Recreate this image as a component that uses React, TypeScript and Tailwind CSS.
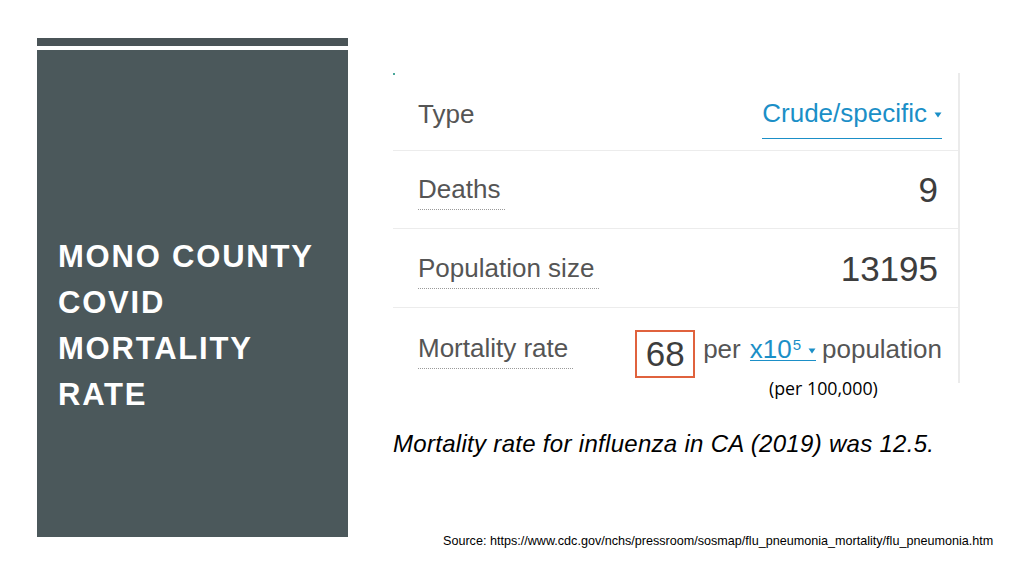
import React from "react";

const sans = "font-['Liberation_Sans',Arial,sans-serif]";

function Caret() {
  return (
    <svg width="8" height="6" viewBox="0 0 8 6" className="ml-[7px] mt-[12px] shrink-0">
      <path d="M0.5 0.5 H7.5 L4 5.5 Z" fill="#1b8fc7" />
    </svg>
  );
}

function Label({ text, dotted = false }: { text: string; dotted?: boolean }) {
  return (
    <span
      className={
        dotted
          ? "border-b-[1.5px] border-dotted border-[#9a9a9a] pb-[5px] pr-[5px] leading-none"
          : "leading-none"
      }
    >
      {text}
    </span>
  );
}

function Row({
  label,
  dotted,
  last,
  className,
  children,
}: {
  label: string;
  dotted?: boolean;
  last?: boolean;
  className: string;
  children: React.ReactNode;
}) {
  return (
    <div
      className={`flex items-center justify-between pl-[25px] pr-[16px] ${className} ${
        last ? "" : "border-b border-[#ececec]"
      }`}
    >
      <div className="text-[26px] text-[#555]">
        <Label text={label} dotted={dotted} />
      </div>
      {children}
    </div>
  );
}

export default function App() {
  return (
    <div className={`flex h-[576px] w-[1024px] bg-white ${sans}`}>
      {/* title column */}
      <div className="ml-[37px] mt-[38px] flex w-[311px] flex-col gap-[4px]">
        <div className="h-[8px] bg-[#4a5457]" />
        <div className="h-[487px] bg-[#4b585b] pl-[21px] pt-[184px]">
          <h1 className="text-[31px] font-bold uppercase leading-[46px] tracking-[1.8px] text-white">
            Mono County
            <br />
            Covid
            <br />
            Mortality
            <br />
            Rate
          </h1>
        </div>
      </div>

      {/* content column */}
      <div className="ml-[45px] flex flex-col pt-[73px]">
        <div className="relative flex w-[567px] flex-col border-r-2 border-[#ebebeb]">
          <span className="absolute left-0 top-0 h-[2px] w-[2px] bg-[#4aa79a]" />
          <Row label="Type" className="h-[78px] pt-[5px]">
            <a className="mt-[11px] flex items-start border-b-[1.5px] border-[#1b8fc7] pb-[12px] text-[26px] leading-none text-[#1b8fc7]">
              Crude/specific
              <Caret />
            </a>
          </Row>
          <Row label="Deaths" dotted className="h-[78px]">
            <span className="pr-[4px] text-[35px] leading-none text-[#3d3d3d]">9</span>
          </Row>
          <Row label="Population size" dotted className="h-[79px]">
            <span className="pr-[4px] text-[35px] leading-none text-[#3d3d3d]">13195</span>
          </Row>
          <Row label="Mortality rate" dotted last className="h-[75px] pt-[6px]">
            <div className="flex items-center text-[26px] leading-none text-[#555]">
              <span className="mt-[10px] flex h-[48px] w-[60px] items-center justify-center border-2 border-[#e0623d] text-[35px] text-[#3d3d3d]">
                68
              </span>
              <span className="ml-[8px]">per</span>
              <a className="ml-[9px] flex h-[25px] items-start border-b-[1.5px] border-[#1b8fc7] text-[#1b8fc7]">
                x10
                <span className="ml-[1px] mt-[1px] text-[15px] leading-none">5</span>
                <Caret />
              </a>
              <span className="ml-[6px]">population</span>
            </div>
          </Row>
        </div>

        <p className="-mt-[3px] ml-[376px] font-['Open_Sans',sans-serif] text-[17.8px] leading-none text-black">
          (per 100,000)
        </p>

        <p className="mt-[34px] text-[24px] italic leading-none tracking-[0.3px] text-black">
          Mortality rate for influenza in CA (2019) was 12.5.
        </p>

        <p className="ml-[50px] mt-[79px] whitespace-nowrap text-[12.6px] leading-none text-black">
          Source: https://www.cdc.gov/nchs/pressroom/sosmap/flu_pneumonia_mortality/flu_pneumonia.htm
        </p>
      </div>
    </div>
  );
}
